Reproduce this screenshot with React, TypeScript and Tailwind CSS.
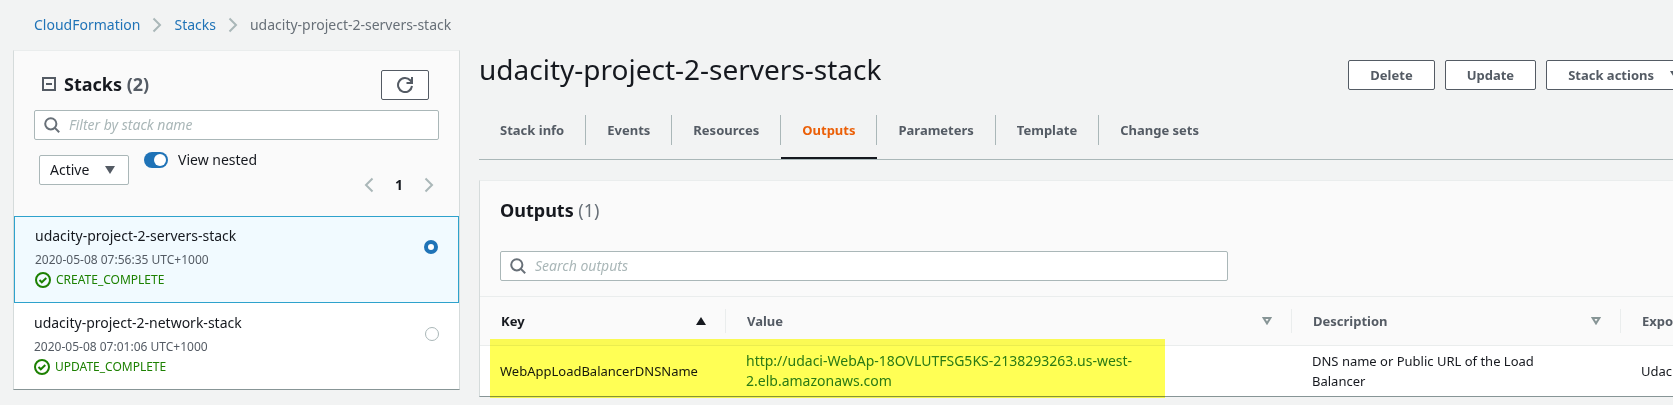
import { useState } from "react";
import type { ReactNode } from "react";

function Chevron({ left = false }: { left?: boolean }) {
  return (
    <svg width="10" height="16" viewBox="0 0 10 16" fill="none" stroke="#aab7b8" strokeWidth="2" aria-hidden="true">
      <path d={left ? "M8.5 1.5 2 8l6.5 6.5" : "M1.5 1.5 8 8l-6.5 6.5"} />
    </svg>
  );
}

function SearchIcon() {
  return (
    <svg width="16" height="16" viewBox="0 0 16 16" fill="none" stroke="#687078" strokeWidth="2" aria-hidden="true">
      <circle cx="6.8" cy="6.8" r="5.6" />
      <path d="m10.6 10.6 4.6 4.6" />
    </svg>
  );
}

function CheckCircle() {
  return (
    <svg width="16" height="16" viewBox="0 0 16 16" fill="none" stroke="#1d8102" strokeWidth="2" aria-hidden="true">
      <circle cx="8" cy="8" r="7" />
      <path d="m4.5 8 2.3 2.3L11.3 6" />
    </svg>
  );
}

function CaretDown() {
  return (
    <svg width="10" height="8" viewBox="0 0 10 8" fill="#545b64" className="shrink-0" aria-hidden="true">
      <path d="M0 0h10L5 8z" />
    </svg>
  );
}

function SortIcon({ active }: { active: boolean }) {
  return (
    <svg width="10" height="8" viewBox="0 0 10 8" aria-hidden="true">
      {active ? (
        <path d="M0 8h10L5 0z" fill="#16191f" />
      ) : (
        <path d="M1.6 1h6.8L5 6.4z" fill="none" stroke="#879596" strokeWidth="2" />
      )}
    </svg>
  );
}

function SearchBox({ label, className }: { label: string; className: string }) {
  return (
    <label
      className={`flex h-[30px] items-center gap-[9px] rounded-xs border border-[#aab7b8] bg-white px-[9px] ${className}`}
    >
      <SearchIcon />
      <input
        type="text"
        aria-label={label}
        placeholder={label}
        className="min-w-0 flex-1 bg-transparent text-sm outline-none placeholder:text-[#aab7b8] placeholder:italic"
      />
    </label>
  );
}

function ActionButton({ children }: { children: ReactNode }) {
  return (
    <button
      type="button"
      className="flex h-[30px] items-center gap-4 rounded-xs border border-[#545b64] bg-white px-[21px] font-bold whitespace-nowrap text-[#545b64]"
    >
      {children}
    </button>
  );
}

const stacks = [
  { name: "udacity-project-2-servers-stack", time: "2020-05-08 07:56:35 UTC+1000", status: "CREATE_COMPLETE" },
  { name: "udacity-project-2-network-stack", time: "2020-05-08 07:01:06 UTC+1000", status: "UPDATE_COMPLETE" },
];

const tabs = ["Stack info", "Events", "Resources", "Outputs", "Parameters", "Template", "Change sets"];

const columns = ["Key", "Value", "Description", "Export name"];

function StacksPanel() {
  const [selected, setSelected] = useState(0);
  const [nested, setNested] = useState(true);
  return (
    <aside className="w-[447px] shrink-0 border border-[#d5dbdb] border-t-[#eaeded] border-b-[#879596] bg-white">
      <div className="bg-[#fafafa] px-5 pt-[19px] pb-[23px]">
        <div className="flex items-start justify-between pr-2.5 pl-2">
          <h2 className="flex items-center gap-2 text-lg leading-7 font-bold">
            <svg width="14" height="14" viewBox="0 0 14 14" fill="none" stroke="#545b64" strokeWidth="2" aria-hidden="true">
              <path d="M1 1h12v12H1zM4 7h6" />
            </svg>
            <span>
              Stacks <span className="text-[#545b64]">(2)</span>
            </span>
          </h2>
          <button
            type="button"
            aria-label="Refresh"
            className="flex h-[30px] w-12 items-center justify-center rounded-xs border border-[#545b64] bg-white"
          >
            <svg width="16" height="16" viewBox="0 0 16 16" fill="none" stroke="#545b64" strokeWidth="2" aria-hidden="true">
              <path d="M15 9A7 7 0 1 1 13.2 3.3L15 5.2M15 0v6H9.5" />
            </svg>
          </button>
        </div>
        <SearchBox label="Filter by stack name" className="mt-2.5" />
        <div className="mt-3 flex items-start pl-[5px] text-sm">
          <div className="relative mt-[3px] w-[90px]">
            <select
              aria-label="Stack status"
              className="h-[30px] w-full appearance-none rounded-xs border border-[#aab7b8] bg-white pl-2.5"
            >
              <option>Active</option>
            </select>
            <span className="pointer-events-none absolute top-[11px] right-3.5">
              <CaretDown />
            </span>
          </div>
          <label className="ml-[15px] flex h-4 items-center gap-2.5">
            <input
              type="checkbox"
              role="switch"
              checked={nested}
              onChange={() => setNested(!nested)}
              className="peer sr-only"
            />
            <span className="flex h-4 w-6 rounded-full bg-[#879596] p-0.5 peer-checked:justify-end peer-checked:bg-[#1f73b7]">
              <span className="size-3 rounded-full bg-white" />
            </span>
            View nested
          </label>
          <nav aria-label="Pages" className="mt-[25px] ml-auto flex h-4 items-center gap-[21px] pr-[5px]">
            <button type="button" aria-label="Previous page">
              <Chevron left />
            </button>
            <b>1</b>
            <button type="button" aria-label="Next page">
              <Chevron />
            </button>
          </nav>
        </div>
      </div>
      {stacks.map((stack, i) => (
        <label
          key={stack.name}
          className={
            i === selected
              ? "flex items-start justify-between border border-[#2ea2cc] bg-[#f1faff] px-5 pt-[9px] pb-3"
              : "flex items-start justify-between px-5 pt-2.5 pb-3"
          }
        >
          <span className="flex flex-col">
            <span className="text-sm leading-5">{stack.name}</span>
            <span className="mt-1 text-xs leading-5 text-[#545b64]">{stack.time}</span>
            <span className="flex items-center gap-[5px] text-xs leading-5 text-[#1d8102]">
              <CheckCircle />
              {stack.status}
            </span>
          </span>
          <input
            type="radio"
            name="stack"
            checked={i === selected}
            onChange={() => setSelected(i)}
            className="mt-3.5 size-3.5 appearance-none rounded-full border border-[#aab7b8] bg-white checked:border-4 checked:border-[#1f73b7]"
          />
        </label>
      ))}
    </aside>
  );
}

function OutputsCard() {
  return (
    <section className="mt-5 border border-[#d5dbdb] border-t-[#eaeded] border-b-[#879596] bg-white">
      <div className="bg-[#fafafa] px-5 pt-[15px] pb-[15px]">
        <h2 className="text-lg leading-7 font-bold">
          Outputs <span className="font-normal text-[#687078]">(1)</span>
        </h2>
        <SearchBox label="Search outputs" className="mt-[27px] max-w-[728px]" />
      </div>
      <div className="relative">
        <table className="w-full table-fixed border-collapse">
          <colgroup>
            <col className="w-[246px]" />
            <col className="w-[566px]" />
            <col className="w-[329px]" />
            <col />
          </colgroup>
          <thead>
            <tr className="border-y border-[#eaeded] bg-[#fafafa]">
              {columns.map((name, i) => (
                <th key={name} className="h-[49px] p-0 text-left">
                  <button
                    type="button"
                    className={`flex h-6 w-full items-center justify-between pr-[19px] pl-[21px] font-bold whitespace-nowrap ${
                      i === 0 ? "text-[#16191f]" : "text-[#545b64]"
                    } ${i < 3 ? "border-r border-[#eaeded]" : ""}`}
                  >
                    {name}
                    <SortIcon active={i === 0} />
                  </button>
                </th>
              ))}
            </tr>
          </thead>
          <tbody>
            <tr className="leading-5">
              <td className="px-5 py-[5px]">WebAppLoadBalancerDNSName</td>
              <td className="px-5 py-[5px]">
                <a href="#output" className="block max-w-[440px] text-sm text-[#2a7a3a]">
                  http://udaci-WebAp-18OVLUTFSG5KS-2138293263.us-west-2.elb.amazonaws.com
                </a>
              </td>
              <td className="px-5 py-[5px]">
                <p className="max-w-[250px]">DNS name or Public URL of the Load Balancer</p>
              </td>
              <td className="px-5 py-[5px] whitespace-nowrap">Udacity-WebAppDNS</td>
            </tr>
          </tbody>
        </table>
        <div className="pointer-events-none absolute top-[43px] -bottom-0.5 left-2.5 w-[675px] bg-[#ffff55] mix-blend-multiply" />
      </div>
    </section>
  );
}

export default function App() {
  return (
    <div className="min-h-screen overflow-hidden bg-[#f2f3f3] pl-[13px] font-['Noto_Sans',sans-serif] text-[13px] leading-5 text-[#16191f]">
      <nav aria-label="Breadcrumb" className="flex h-[50px] items-center gap-3 pl-[21px] text-sm">
        <a href="#home" className="text-[#1f73b7]">
          CloudFormation
        </a>
        <Chevron />
        <a href="#stacks" className="text-[#1f73b7]">
          Stacks
        </a>
        <Chevron />
        <span className="text-[#687078]">udacity-project-2-servers-stack</span>
      </nav>
      <div className="flex items-start gap-[19px]">
        <StacksPanel />
        <main className="-mr-[49px] min-w-0 flex-1">
          <div className="flex items-start justify-between pr-5">
            <h1 className="text-[28px] leading-[38px]">udacity-project-2-servers-stack</h1>
            <div className="mt-2.5 flex gap-2.5">
              <ActionButton>Delete</ActionButton>
              <ActionButton>Update</ActionButton>
              <ActionButton>
                Stack actions
                <CaretDown />
              </ActionButton>
            </div>
          </div>
          <div role="tablist" className="mt-[25px] flex border-b border-[#aab7b8]">
            {tabs.map((tab, i) => (
              <button
                key={tab}
                type="button"
                role="tab"
                aria-selected={tab === "Outputs"}
                className={
                  tab === "Outputs"
                    ? "border-b-2 border-[#16191f] pb-3 font-bold text-[#eb5f07]"
                    : "border-b-2 border-transparent pb-3 font-bold text-[#545b64]"
                }
              >
                <span
                  className={
                    i < tabs.length - 1
                      ? "flex h-[30px] items-center border-r border-[#aab7b8] px-[21px]"
                      : "flex h-[30px] items-center px-[21px]"
                  }
                >
                  {tab}
                </span>
              </button>
            ))}
          </div>
          <OutputsCard />
        </main>
      </div>
    </div>
  );
}
